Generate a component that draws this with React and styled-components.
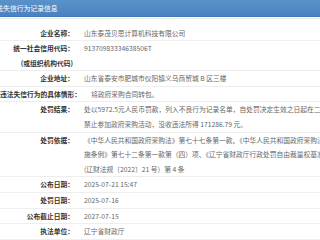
import React from 'react'
import styled, { createGlobalStyle } from 'styled-components'

const rows = [
  { label: ['企业名称：'], value: ['山东泰茂贝思计算机科技有限公司'] },
  {
    label: ['统一社会信用代码：', '(或组织机构代码)'],
    value: ['91370983334638506T']
  },
  { label: ['企业地址：'], value: ['山东省泰安市肥城市仪阳镇义乌商贸城 B 区三楼'] },
  { label: ['违法失信行为的具体情形：'], value: ['将政府采购合同转包。'] },
  {
    label: ['处罚结果：'],
    value: [
      '处以5972.5元人民币罚款，列入不良行为记录名单，自处罚决定生效之日起在二年内',
      '禁止参加政府采购活动，没收违法所得 171286.79 元。'
    ]
  },
  {
    label: ['处罚依据：'],
    value: [
      '《中华人民共和国政府采购法》第七十七条第一款、《中华人民共和国政府采购法实',
      '施条例》第七十二条第一款第（四）项、《辽宁省财政厅行政处罚自由裁量权基准》',
      '(辽财法规〔2022〕21 号）第 4 条'
    ]
  },
  { label: ['公布日期：'], value: ['2025-07-21 15:47'] },
  { label: ['处罚日期：'], value: ['2025-07-16'] },
  { label: ['公布截止日期：'], value: ['2027-07-15'] },
  { label: ['执法单位：'], value: ['辽宁省财政厅'] }
]

export default () => (
  <>
    <GlobalStyle />
    <Page>
      <Header>
        <HeaderTitle>严重违法失信行为记录信息</HeaderTitle>
      </Header>
      <Table>
        {rows.map((row, i) => (
          <Row key={i}>
            <Label>
              {row.label.map((line, j) => (
                <LabelLine key={j} sub={j > 0}>
                  {line}
                </LabelLine>
              ))}
            </Label>
            <Value>
              {row.value.map((line, j) => (
                <ValueLine key={j}>{line}</ValueLine>
              ))}
            </Value>
          </Row>
        ))}
      </Table>
    </Page>
  </>
)

const GlobalStyle = createGlobalStyle`
  html, body {
    margin: 0;
    padding: 0;
    background: #fff;
    overflow: hidden;
  }
  body {
    font-family: "Noto Sans CJK SC", "Noto Sans", sans-serif;
  }
`
const Page = styled.div`
  width: 320px;
  height: 240px;
  overflow: hidden;
`
const Header = styled.div`
  height: 16px;
  display: flex;
  align-items: center;
  background: linear-gradient(#5a93cb, #4982be);
  border-bottom: 1px solid #3f78b3;
  overflow: hidden;
`
const HeaderTitle = styled.div`
  margin-left: -24px;
  color: #fff;
  font-size: 6.8px;
  white-space: nowrap;
`
const Table = styled.div`
  margin-top: 1px;
  border-top: 1px solid #e8e8e8;
  padding-top: 6.5px;
`
const Row = styled.div`
  display: flex;
  gap: 10px;
  border-bottom: 1px solid #eeeeee;
  font-size: 6.75px;
  line-height: 14.6px;
`
const Label = styled.div`
  flex: 0 0 74px;
  display: flex;
  flex-direction: column;
  align-items: flex-end;
  color: #333;
  font-weight: bold;
`
const LabelLine = styled.div`
  white-space: nowrap;
  padding-right: ${props => (props.sub ? '1px' : '0')};
`
const Value = styled.div`
  flex: 1 0 auto;
  color: #666;
`
const ValueLine = styled.div`
  white-space: nowrap;
`
